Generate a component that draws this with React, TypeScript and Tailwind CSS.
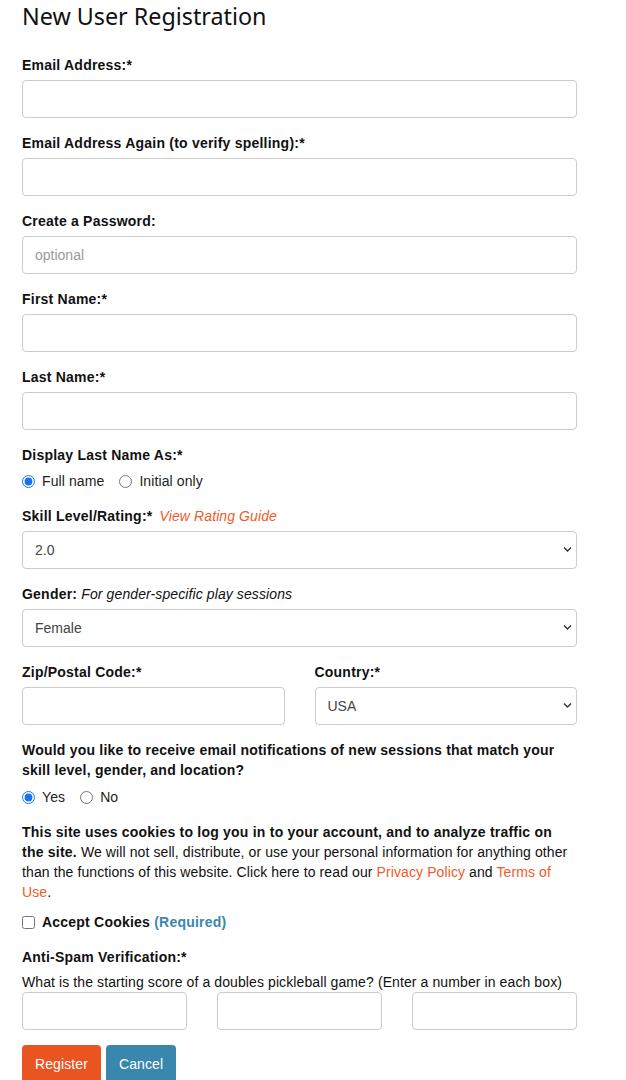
import { useState } from "react";

const inputCls =
  "block w-full h-[38px] rounded-[4px] border border-[#cccccc] bg-white px-3 text-[14px] text-[#555] placeholder:text-[#999] outline-none";

const Label = ({ children, className = "" }: { children: React.ReactNode; className?: string }) => (
  <div className={`text-[14px] leading-[20px] font-bold tracking-[0.22px] text-[#111] ${className}`}>{children}</div>
);

const Select = ({ value, options }: { value: string; options: string[] }) => (
  <div className="relative mt-[5px]">
    <select
      defaultValue={value}
      className="block w-full h-[38px] appearance-none rounded-[4px] border border-[#cccccc] bg-white pl-3 pr-8 text-[14px] text-[#444] outline-none"
    >
      {options.map((o) => (
        <option key={o}>{o}</option>
      ))}
    </select>
    <svg
      className="pointer-events-none absolute right-[5px] top-[15px]"
      width="9"
      height="7"
      viewBox="0 0 9 7"
      fill="none"
    >
      <path d="M1 1.5 L4.5 5 L8 1.5" stroke="#333" strokeWidth="1.4" />
    </svg>
  </div>
);

const Radio = ({ name, label, checked }: { name: string; label: string; checked?: boolean }) => (
  <label className="flex items-center text-[14px] tracking-[0.1px] text-[#222]">
    <input type="radio" name={name} defaultChecked={checked} className="m-0 w-[13px] h-[13px] accent-[#1a73e8]" />
    <span className="ml-[7px]">{label}</span>
  </label>
);

export default function App() {
  const [cookies, setCookies] = useState(false);

  return (
    <div className="bg-white min-h-screen font-['Liberation_Sans',Arial,sans-serif] text-[#222]">
      <div className="ml-[22px] w-[555px]">
        <h1 className="font-['Noto_Sans',sans-serif] text-[23.3px] leading-[32px] font-normal text-[#111]">
          New User Registration
        </h1>

        <Label className="mt-[23px]">Email Address:*</Label>
        <input type="email" className={`${inputCls} mt-[5px]`} />

        <Label className="mt-[15px]">Email Address Again (to verify spelling):*</Label>
        <input type="email" className={`${inputCls} mt-[5px]`} />

        <Label className="mt-[15px]">Create a Password:</Label>
        <input type="password" placeholder="optional" className={`${inputCls} mt-[5px]`} />

        <Label className="mt-[15px]">First Name:*</Label>
        <input className={`${inputCls} mt-[5px]`} />

        <Label className="mt-[15px]">Last Name:*</Label>
        <input className={`${inputCls} mt-[5px]`} />

        <Label className="mt-[15px]">Display Last Name As:*</Label>
        <div className="mt-[6px] flex items-center gap-[15px] h-[20px]">
          <Radio name="lastname" label="Full name" checked />
          <Radio name="lastname" label="Initial only" />
        </div>

        <Label className="mt-[15px]">
          Skill Level/Rating:*{" "}
          <a href="#" className="ml-[3px] font-normal italic tracking-[0.1px] text-[#f05a28]">
            View Rating Guide
          </a>
        </Label>
        <Select value="2.0" options={["2.0", "2.5", "3.0", "3.5", "4.0", "4.5", "5.0"]} />

        <Label className="mt-[15px]">
          Gender: <span className="font-normal italic tracking-[0.1px]">For gender-specific play sessions</span>
        </Label>
        <Select value="Female" options={["Female", "Male"]} />

        <div className="mt-[15px] grid grid-cols-2 gap-[30px]">
          <div>
            <Label>Zip/Postal Code:*</Label>
            <input className={`${inputCls} mt-[5px]`} />
          </div>
          <div>
            <Label>Country:*</Label>
            <Select value="USA" options={["USA", "Canada"]} />
          </div>
        </div>

        <Label className="mt-[15px]">
          Would you like to receive email notifications of new sessions that match your skill level, gender, and
          location?
        </Label>
        <div className="mt-[7px] flex items-center gap-[15px] h-[20px]">
          <Radio name="notify" label="Yes" checked />
          <Radio name="notify" label="No" />
        </div>

        <p className="mt-[15px] text-[14px] leading-[20px] tracking-[0.1px] text-[#111]">
          <b className="tracking-[0.22px]">
            This site uses cookies to log you in to your account, and to analyze traffic on the site.
          </b>{" "}
          We will not sell, distribute, or use your personal information for anything other than the functions of
          this website. Click here to read our{" "}
          <a href="#" className="text-[#f05a28]">
            Privacy Policy
          </a>{" "}
          and{" "}
          <a href="#" className="text-[#f05a28]">
            Terms of Use
          </a>
          .
        </p>

        <label className="mt-[10px] flex items-center h-[20px] text-[14px] font-bold tracking-[0.22px] text-[#111]">
          <input
            type="checkbox"
            checked={cookies}
            onChange={(e) => setCookies(e.target.checked)}
            className="m-0 w-[13px] h-[13px]"
          />
          <span className="ml-[7px]">
            Accept Cookies <span className="text-[#3a87ad]">(Required)</span>
          </span>
        </label>

        <Label className="mt-[15px]">Anti-Spam Verification:*</Label>
        <div className="mt-[5px] text-[14px] leading-[20px] tracking-[0.1px] text-[#111]">
          What is the starting score of a doubles pickleball game? (Enter a number in each box)
        </div>
        <div className="grid grid-cols-3 gap-[30px]">
          <input className={inputCls} />
          <input className={inputCls} />
          <input className={inputCls} />
        </div>

        <div className="mt-[15px] flex gap-[5px] pb-4">
          <button className="h-[38px] rounded-[4px] bg-[#e95420] px-[13px] text-[14px] tracking-[0.1px] text-white">
            Register
          </button>
          <button className="h-[38px] rounded-[4px] bg-[#3a87ad] px-[13px] text-[14px] tracking-[0.1px] text-white">
            Cancel
          </button>
        </div>
      </div>
    </div>
  );
}
